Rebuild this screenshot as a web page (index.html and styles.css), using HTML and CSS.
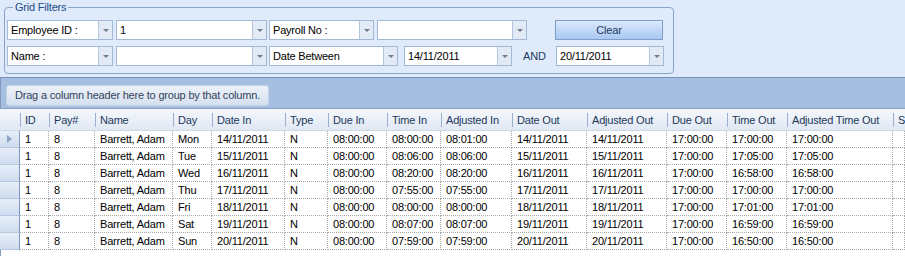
FILE: index.html
```html
<!DOCTYPE html>
<html lang="en">
<head>
	<meta charset="UTF-8">
	<title>Timesheet Grid</title>
	<link rel="stylesheet" href="styles.css">
</head>
<body>
	<div class="filters">
		<fieldset class="group">
			<legend>Grid Filters</legend>
			<div class="row">
				<div class="combo w106"><span class="val">Employee ID :</span><span class="btn"></span></div>
				<div class="combo w151 ml3"><span class="val">1</span><span class="btn"></span></div>
				<div class="combo w105 ml2"><span class="val">Payroll No :</span><span class="btn"></span></div>
				<div class="combo w150 ml3"><span class="val"></span><span class="btn"></span></div>
				<button class="clear">Clear</button>
			</div>
			<div class="row">
				<div class="combo w106"><span class="val">Name :</span><span class="btn"></span></div>
				<div class="combo w151 ml3"><span class="val"></span><span class="btn"></span></div>
				<div class="combo w129 ml2"><span class="val">Date Between</span><span class="btn"></span></div>
				<div class="combo w108 ml6"><span class="val">14/11/2011</span><span class="btn"></span></div>
				<span class="and">AND</span>
				<div class="combo w108"><span class="val">20/11/2011</span><span class="btn"></span></div>
			</div>
		</fieldset>
	</div>

	<div class="grid">
		<div class="group-panel">
			<div class="drop-hint">Drag a column header here to group by that column.</div>
		</div>
		<table class="rows">
			<colgroup>
				<col style="width:20px"><col style="width:29px"><col style="width:46px"><col style="width:78px">
				<col style="width:39px"><col style="width:73px"><col style="width:43px"><col style="width:59px">
				<col style="width:54px"><col style="width:71px"><col style="width:75px"><col style="width:80px">
				<col style="width:60px"><col style="width:60px"><col style="width:106px"><col style="width:12px">
			</colgroup>
			<thead>
				<tr>
					<th class="ind"></th>
					<th>ID</th><th>Pay#</th><th>Name</th><th>Day</th><th>Date In</th><th>Type</th>
					<th>Due In</th><th>Time In</th><th>Adjusted In</th><th>Date Out</th><th>Adjusted Out</th>
					<th>Due Out</th><th>Time Out</th><th>Adjusted Time Out</th><th>S</th>
				</tr>
			</thead>
			<tbody>
				<tr>
					<td class="ind"><span class="arrow"></span></td>
					<td>1</td><td>8</td><td>Barrett, Adam</td><td>Mon</td><td>14/11/2011</td><td>N</td>
					<td>08:00:00</td><td>08:00:00</td><td>08:01:00</td><td>14/11/2011</td><td>14/11/2011</td>
					<td>17:00:00</td><td>17:00:00</td><td>17:00:00</td><td></td>
				</tr>
				<tr>
					<td class="ind"></td>
					<td>1</td><td>8</td><td>Barrett, Adam</td><td>Tue</td><td>15/11/2011</td><td>N</td>
					<td>08:00:00</td><td>08:06:00</td><td>08:06:00</td><td>15/11/2011</td><td>15/11/2011</td>
					<td>17:00:00</td><td>17:05:00</td><td>17:05:00</td><td></td>
				</tr>
				<tr>
					<td class="ind"></td>
					<td>1</td><td>8</td><td>Barrett, Adam</td><td>Wed</td><td>16/11/2011</td><td>N</td>
					<td>08:00:00</td><td>08:20:00</td><td>08:20:00</td><td>16/11/2011</td><td>16/11/2011</td>
					<td>17:00:00</td><td>16:58:00</td><td>16:58:00</td><td></td>
				</tr>
				<tr>
					<td class="ind"></td>
					<td>1</td><td>8</td><td>Barrett, Adam</td><td>Thu</td><td>17/11/2011</td><td>N</td>
					<td>08:00:00</td><td>07:55:00</td><td>07:55:00</td><td>17/11/2011</td><td>17/11/2011</td>
					<td>17:00:00</td><td>17:00:00</td><td>17:00:00</td><td></td>
				</tr>
				<tr>
					<td class="ind"></td>
					<td>1</td><td>8</td><td>Barrett, Adam</td><td>Fri</td><td>18/11/2011</td><td>N</td>
					<td>08:00:00</td><td>08:00:00</td><td>08:00:00</td><td>18/11/2011</td><td>18/11/2011</td>
					<td>17:00:00</td><td>17:01:00</td><td>17:01:00</td><td></td>
				</tr>
				<tr>
					<td class="ind"></td>
					<td>1</td><td>8</td><td>Barrett, Adam</td><td>Sat</td><td>19/11/2011</td><td>N</td>
					<td>08:00:00</td><td>08:07:00</td><td>08:07:00</td><td>19/11/2011</td><td>19/11/2011</td>
					<td>17:00:00</td><td>16:59:00</td><td>16:59:00</td><td></td>
				</tr>
				<tr>
					<td class="ind"></td>
					<td>1</td><td>8</td><td>Barrett, Adam</td><td>Sun</td><td>20/11/2011</td><td>N</td>
					<td>08:00:00</td><td>07:59:00</td><td>07:59:00</td><td>20/11/2011</td><td>20/11/2011</td>
					<td>17:00:00</td><td>16:50:00</td><td>16:50:00</td><td></td>
				</tr>
			</tbody>
		</table>
	</div>
</body>
</html>
```

FILE: styles.css
```css
body {
	margin: 0;
	font-size: 11px;
	font-family: "Liberation Sans", Arial, sans-serif;
	letter-spacing: -0.2px;
	color: #000;
	background: #fff;
	overflow: hidden;
}

/* filter panel */
.filters {
	height: 77px;
	background: #dfebfb;
	border-bottom: 1px solid #7290bb;
}

.group {
	box-sizing: border-box;
	width: 670px;
	height: 74px;
	margin: 0 0 0 4px;
	padding: 6px 0 0 2px;
	border: 1px solid #8aa4c8;
	border-radius: 4px;
}

.group legend {
	margin-left: 6px;
	padding: 0 2px;
	line-height: 14px;
	color: #1f4a86;
}

.row {
	display: flex;
	align-items: center;
	height: 20px;
}

.row + .row {
	margin-top: 6px;
}

.combo {
	box-sizing: border-box;
	display: flex;
	height: 20px;
	background: #fff;
	border: 1px solid #a3b8d5;
}

.combo .val {
	flex: 1;
	padding-left: 3px;
	line-height: 18px;
	white-space: nowrap;
	overflow: hidden;
}

.combo .btn {
	width: 13px;
	border-left: 1px solid #b3c6df;
	background: #e2eaf6;
	display: flex;
	align-items: center;
	justify-content: center;
}

.combo .btn::after {
	content: "";
	border-top: 3px solid #6f7d90;
	border-left: 3px solid transparent;
	border-right: 3px solid transparent;
	margin-top: 1px;
}

.w105 { width: 105px; }
.w106 { width: 106px; }
.w108 { width: 108px; }
.w129 { width: 129px; }
.w150 { width: 150px; }
.w151 { width: 151px; }
.ml2 { margin-left: 2px; }
.ml3 { margin-left: 3px; }
.ml6 { margin-left: 6px; }

.and {
	width: 44px;
	padding-left: 11px;
	box-sizing: border-box;
	color: #1f3a5e;
}

.clear {
	box-sizing: border-box;
	width: 108px;
	height: 20px;
	margin-left: 28px;
	padding: 0;
	font: inherit;
	letter-spacing: inherit;
	color: #1f3a5e;
	border: 1px solid #7f9dc5;
	background: linear-gradient(#dce9fb, #c2d8f8 50%, #a9c8f3);
}

/* grid */
.grid {
	height: 178px;
	background: #fff;
	border-left: 1px solid #7e9ac0;
	box-sizing: border-box;
}

.group-panel {
	height: 31px;
	padding: 7px 0 0 5px;
	box-sizing: border-box;
	background: #a6bfe1;
	border-bottom: 1px solid #85a1c7;
}

.drop-hint {
	display: inline-block;
	box-sizing: border-box;
	height: 21px;
	padding: 0 8px;
	line-height: 19px;
	color: #33445c;
	border: 1px solid #c3d3e8;
	border-radius: 3px;
	background: linear-gradient(#edf2f9, #d5e0ef);
}

.rows {
	table-layout: fixed;
	width: 904px;
	border-spacing: 0;
	margin-left: -1px;
}

.rows th {
	height: 21px;
	padding: 0 0 0 5px;
	text-align: left;
	font-weight: normal;
	color: #22385a;
	white-space: nowrap;
	overflow: hidden;
	border-bottom: 1px solid #cdd8e7;
	background: linear-gradient(#9cb0cc, #9cb0cc) no-repeat 0 4px / 1px 14px,
		linear-gradient(#f5f8fc, #e0e8f4);
}

.rows th.ind {
	background: linear-gradient(#f5f8fc, #e0e8f4);
}

.rows td {
	height: 16px;
	padding: 0 0 0 5px;
	line-height: 16px;
	white-space: nowrap;
	overflow: hidden;
	border-right: 1px dotted #a8a8a8;
	border-bottom: 1px dotted #a8a8a8;
}

.rows td.ind {
	padding: 0 0 0 7px;
	background: linear-gradient(#e6eef9, #cfdcef);
	border-right: 1px solid #7e9ac0;
	border-bottom: 1px solid #b5c7df;
}

.arrow {
	display: inline-block;
	vertical-align: middle;
	margin-top: -2px;
	border-left: 5px solid #8aa3c6;
	border-top: 4px solid transparent;
	border-bottom: 4px solid transparent;
}
```
